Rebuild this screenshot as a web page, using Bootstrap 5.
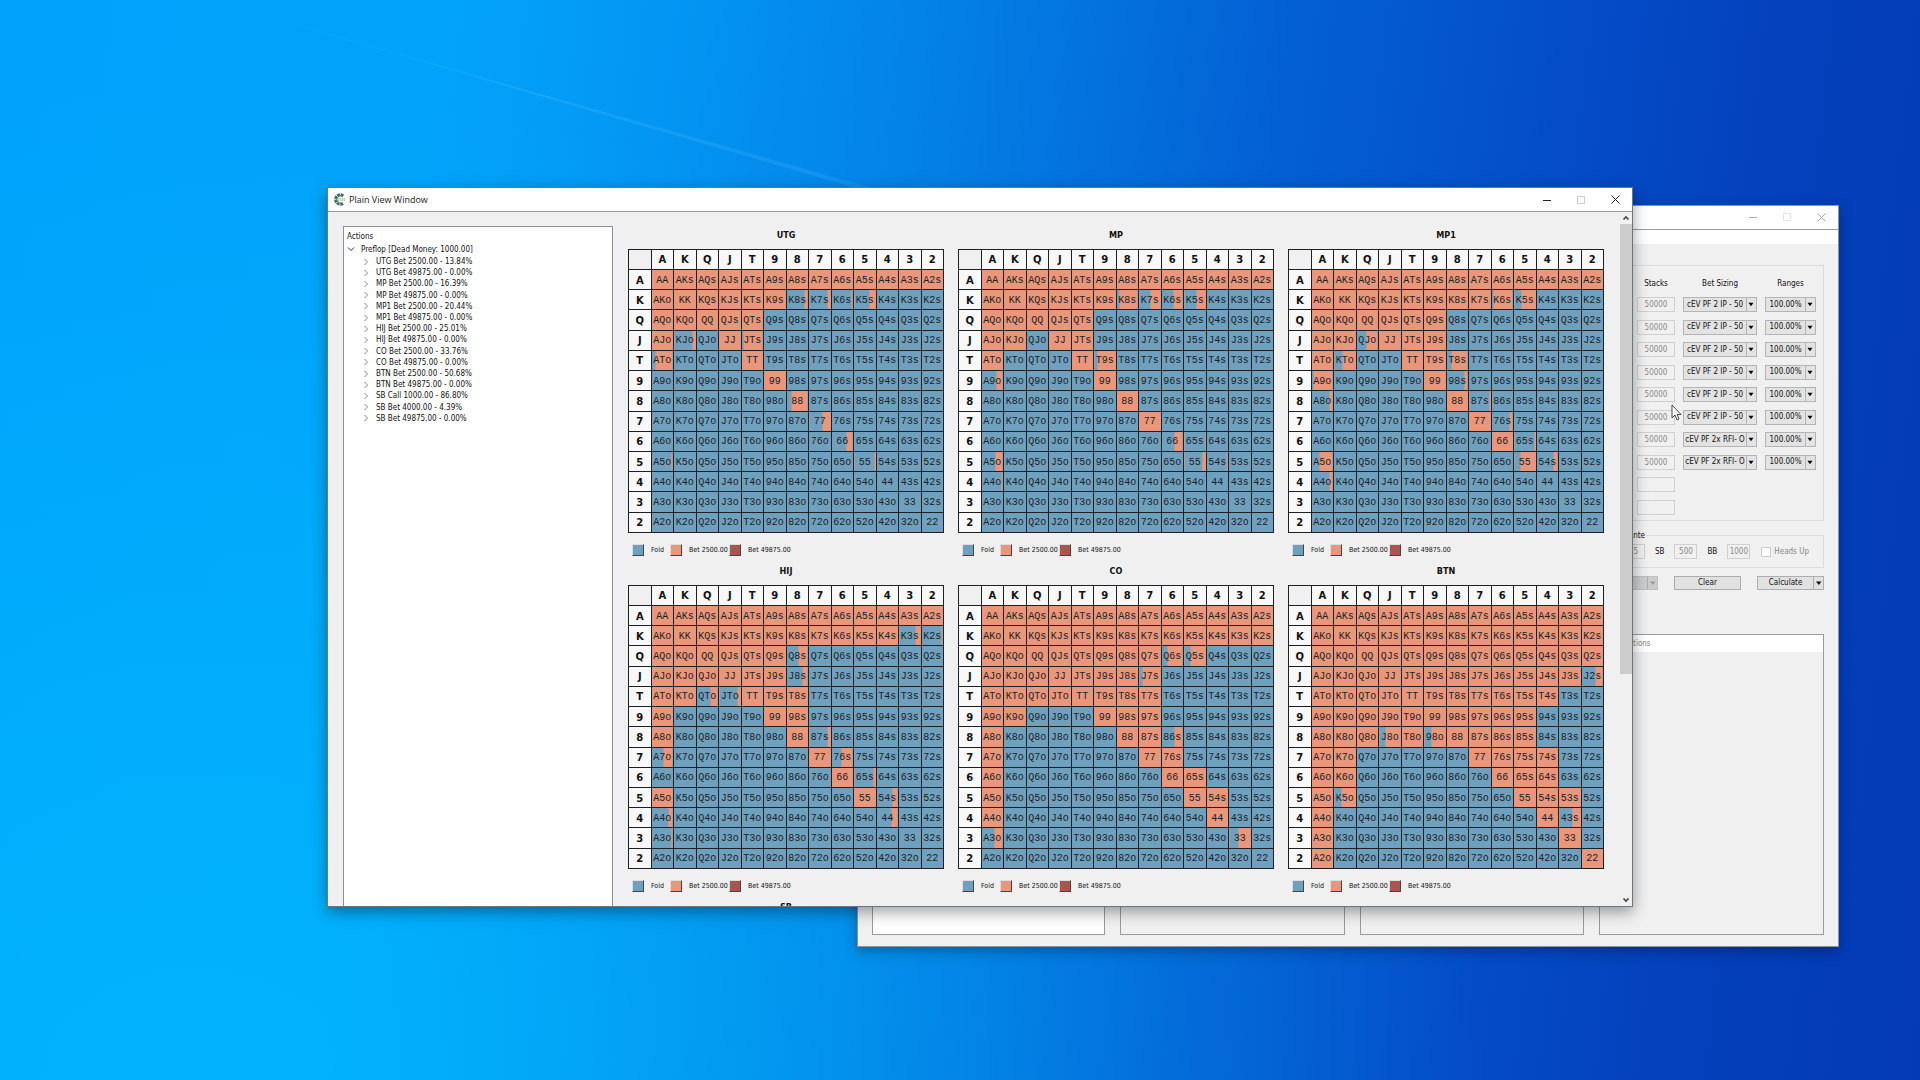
<!DOCTYPE html>
<html lang="en">
<head>
<meta charset="utf-8">
<meta name="viewport" content="width=device-width, initial-scale=1">
<title>Plain View Window</title>
<link href="https://cdn.jsdelivr.net/npm/bootstrap@5.3.0/dist/css/bootstrap.min.css" rel="stylesheet">
<style>
:root { --fold: #6fa1bf; --bet: #e9967a; --shove: #ac554e; --ui: "DejaVu Sans Condensed", "DejaVu Sans", sans-serif; }
body { font-family: var(--ui); font-size: 8px; line-height: 11px; color: #111; cursor: default; }
.desktop { background:
  radial-gradient(ellipse 1300px 1000px at 10% 100%, rgba(0,190,255,.6), rgba(0,190,255,0)),
  linear-gradient(97deg, #00a2fb 0%, #02a3fa 22%, #0394f2 34%, #037de4 48%, #0360d4 63%, #044cc8 77%, #0440bb 88%, #043ab5 100%); }
.beam { position: absolute; inset: 0; width: 100%; height: 100%; }
.app-window { position: absolute; background: #f0f0f0; border: 1px solid #6b7680; box-shadow: 0 5px 14px rgba(0,0,0,.38); overflow: hidden; }
.win-main { inset: 187px 287px 173px 327px; }
.win-back { inset: 205px 81px 133px 857px; border-color: #8b959d; box-shadow: 0 4px 12px rgba(0,0,0,.3); }
.titlebar { height: 24px; flex: none; background: #fff; border-bottom: 1px solid #9c9c9c; font: 9px/22px "Open Sans", sans-serif; color: #222; }
.caption-btn { width: 34px; height: 22px; padding: 0; border: 0; background: none; line-height: 0; color: #222; }
.win-back .caption-btn { color: #aaa; }
.caption-btn.dim { color: #ccc; }
.win-back .caption-btn.dim { color: #e4e4e4; }
.app-icon { margin: 0 3px 0 5px; }

/* action tree */
.tree { width: 270px; flex: none; margin: 14px 0 0 15px; background: #fff; border: 1px solid #8a9096; border-bottom: 0; padding: 4px 3px; }
.tree-rows { display: grid; grid-auto-rows: 1fr; height: 168px; padding-left: 15px; }
.tree svg { width: 8px; height: 8px; flex: none; fill: none; stroke: #888; }
.tree .root-node svg { stroke: #333; }
.root-node { height: 14px; }
.node-text { padding-left: 6px; }

/* range charts */
.charts { display: grid; grid-template-columns: repeat(3, 1fr); column-gap: 14px; padding: 12px 16px 0 15px; flex: 1; align-content: start; }
.chart { height: 336px; }
.chart h2 { font: bold 9px/22px var(--ui); margin: 0 0 3px; text-align: center; }
.range { width: 100%; height: 284px; table-layout: fixed; border-collapse: collapse; }
.range th, .range td { border: 1px solid #1b2125; padding: 0; text-align: center; vertical-align: middle; white-space: nowrap; overflow: hidden; }
.range th { background: #f8f8f8; font: bold 10px/12px "DejaVu Sans", sans-serif; }
.range thead th { height: 20px; }
.range tbody th, .range tbody td { padding-top: 2px; }
.range .corner { background: #f0f0f0; }
.range td { font: 10px/12px "Liberation Mono", monospace; color: #1c2226; background: linear-gradient(90deg, var(--fold) var(--cut), var(--bet) var(--cut)); }
.legend-row { display: grid; grid-template-columns: 12px 26px 12px 47px 12px 60px; height: 12px; margin-top: 11px; padding-left: 4px; font-size: 7px; line-height: 12px; }
.swatch { width: 12px; height: 12px; border: 1px solid; border-color: #ddd #444 #444 #ddd; }
.tag { text-align: left; white-space: nowrap; padding-left: 7px; }
.scrollbar { width: 12px; flex: none; background: #f0f0f0; }
.scrollbar svg { width: 12px; height: 12px; fill: none; stroke: #444; stroke-width: 1.6; }
.thumb { height: 450px; background: #cdcdcd; }

/* settings window */
.menu-strip { height: 14px; flex: none; background: #fff; }
.settings-body { padding: 0 14px; }
.group-box { border: 1px solid #dcdcdc; }
.seats { margin-top: 21px; height: 256px; padding: 13px 7px 0; }
.seat-grid { display: grid; grid-template-columns: 38px 74px 51px; column-gap: 8px; justify-content: end; text-align: center; }
.seat-head { line-height: 9px; height: 18px; }
.seat-grid > * { min-width: 0; }
.seat-rows { display: grid; grid-template-rows: repeat(10, 1fr); height: 225px; }
.field { width: 100%; height: 15px; border: 1px solid #d0d0d0; background: #f0f0f0; padding: 0; font: 8px/12px var(--ui); color: #888; text-align: center; border-radius: 0; }
.combo { width: 100%; height: 15px; appearance: none; border: 1px solid #b4b4b4; border-radius: 0; padding: 0 10px 0 0; font: 8px/12px var(--ui); color: #111; text-align: center; text-overflow: clip;
  background: #e3e3e3 url("data:image/svg+xml,%3Csvg xmlns='http://www.w3.org/2000/svg' width='10' height='14'%3E%3Cpath d='M.5 0v14' stroke='%23b4b4b4'/%3E%3Cpath d='M2.500 5h5l-2.500 3.500z'/%3E%3C/svg%3E") no-repeat right center; }
.blinds { height: 33px; margin-top: 14px; padding: 0 14px 0 0; color: #111; position: relative; }
.blinds legend { position: absolute; top: -6px; right: 177px; width: auto; margin: 0; padding: 0 1px; font-size: 8px; line-height: 11px; float: none; background: #f0f0f0; }
.blinds .field { width: 23px; }
.blind-tag { margin: 0 10px; }
.tick { appearance: none; width: 10px; height: 10px; border: 1px solid #ccc; background: #fff; margin: 0 3px 0 11px; }
.muted { color: #888; }
.push { height: 14px; border: 1px solid #adadad; background: #e1e1e1; padding: 0; font: 8px/12px var(--ui); color: #111; width: 67px; }
.push:disabled { background: #ccc; border-color: #bfbfbf; color: #999; }
.split { border-right: 1px solid #adadad; flex: 1; }
.drop-arrow { width: 9px; fill: currentColor; }
.panels { display: grid; grid-template-columns: 233px repeat(3, 1fr); column-gap: 15px; height: 301px; margin-top: 44px; }
.panel-box { border: 1px solid #9a9a9a; }
.panel-head { height: 17px; background: #fff; line-height: 17px; padding-left: 24px; color: #888; }
.pointer { position: absolute; left: 1671px; top: 404px; width: 11px; height: 17px; }
</style>
<script src="https://cdn.jsdelivr.net/npm/bootstrap@5.3.0/dist/js/bootstrap.bundle.min.js"></script>
</head>
<body>
<main class="desktop position-relative vh-100 overflow-hidden">
  <svg class="beam" viewBox="0 0 1920 1080" preserveAspectRatio="none" aria-hidden="true">
    <defs><linearGradient id="ray"><stop offset="0" stop-color="#5fc4ff" stop-opacity="0"/><stop offset=".5" stop-color="#5fc4ff" stop-opacity=".22"/><stop offset="1" stop-color="#5fc4ff" stop-opacity=".15"/></linearGradient></defs>
    <path d="M210 0L872 188L856 188Z" fill="url(#ray)"/>
  </svg>

  <section class="app-window win-back d-flex flex-column" aria-label="Settings">
    <header class="titlebar d-flex justify-content-end">
      <button class="caption-btn" aria-label="Minimize"><svg width="8" height="8" stroke="currentColor"><path d="M0 4.500h8"/></svg></button>
      <button class="caption-btn dim" aria-label="Maximize"><svg width="8" height="8" stroke="currentColor" fill="none"><path d="M.5.5h7v7h-7z"/></svg></button>
      <button class="caption-btn" aria-label="Close"><svg width="9" height="9" stroke="currentColor"><path d="M.5.5l8 8M8.500.5l-8 8"/></svg></button>
    </header>
    <div class="menu-strip"></div>
    <div class="flex-grow-1 settings-body">
      <div class="group-box seats">
        <div class="seat-grid" id="seats">
          <div class="seat-head">Stacks</div><div class="seat-head">Bet Sizing</div><div class="seat-head">Ranges</div>
          <div class="seat-rows" id="stacks"></div><div class="seat-rows" id="sizing"></div><div class="seat-rows" id="ranges"></div>
        </div>
      </div>
      <fieldset class="group-box blinds d-flex justify-content-end align-items-center">
        <legend>Ante</legend>
        <input class="field" value="25" aria-label="Ante" disabled>
        <label class="blind-tag" for="sb">SB</label><input class="field" id="sb" value="500" disabled>
        <label class="blind-tag" for="bb">BB</label><input class="field" id="bb" value="1000" disabled>
        <input type="checkbox" class="tick" id="hu" disabled><label class="muted" for="hu">Heads Up</label>
      </fieldset>
      <div class="d-flex justify-content-end mt-2 gap-3">
        <button class="push d-flex" disabled aria-label="Options"><span class="split">&nbsp;</span><svg class="drop-arrow" height="12" viewBox="0 0 9 12"><path d="M2 4.500h5.500L4.800 8z"/></svg></button>
        <button class="push">Clear</button>
        <button class="push d-flex"><span class="split">Calculate</span><svg class="drop-arrow" height="12" viewBox="0 0 9 12"><path d="M2 4.500h5.500L4.800 8z"/></svg></button>
      </div>
      <div class="panels">
        <div class="panel-box bg-white"></div><div class="panel-box"></div><div class="panel-box"></div>
        <div class="panel-box"><div class="panel-head">Actions</div></div>
      </div>
    </div>
  </section>
  <svg class="pointer" viewBox="0 0 11 17" aria-hidden="true"><path d="M1 1v13l3-3 2 5 2-1-2-4.500h4z" fill="#fff" stroke="#333" stroke-width=".9"/></svg>

  <section class="app-window win-main d-flex flex-column" aria-label="Plain View Window">
    <header class="titlebar d-flex align-items-center">
      <svg class="app-icon" width="13" height="13" viewBox="0 0 13 13" fill="none" aria-hidden="true">
        <path d="M10.500 2.600A5 5 0 1 0 10.500 10.400" stroke="#3f6f62" stroke-width="2.400" stroke-dasharray="3 .7"/>
        <path d="M9.500 3.500A3.600 3.600 0 1 0 9.500 9.500" stroke="#26413b" stroke-width=".8"/>
        <path d="M4.500 5.800h8M4.500 7.200h8" stroke="#7fb59a" stroke-width=".9" stroke-dasharray="1.500 .5"/>
      </svg>
      <span>Plain View Window</span>
      <div class="ms-auto d-flex">
        <button class="caption-btn" aria-label="Minimize"><svg width="8" height="8" stroke="currentColor"><path d="M0 4.500h8"/></svg></button>
        <button class="caption-btn dim" aria-label="Maximize"><svg width="8" height="8" stroke="currentColor" fill="none"><path d="M.5.5h7v7h-7z"/></svg></button>
        <button class="caption-btn" aria-label="Close"><svg width="9" height="9" stroke="currentColor"><path d="M.5.5l8 8M8.500.5l-8 8"/></svg></button>
      </div>
    </header>
    <div class="d-flex flex-grow-1 overflow-hidden">
      <aside class="tree">
        <div>Actions</div>
        <div class="root-node d-flex align-items-center"><svg viewBox="0 0 8 8"><path d="M1 2.500l3 3 3-3"/></svg><span class="node-text">Preflop [Dead Money: 1000.00]</span></div>
        <div class="tree-rows" id="tree"></div>
      </aside>
      <div class="charts" id="charts"></div>
      <div class="scrollbar d-flex flex-column">
        <svg viewBox="0 0 12 12"><path d="M3.500 7.500L6 5l2.500 2.500"/></svg>
        <div class="thumb"></div>
        <svg class="mt-auto" viewBox="0 0 12 12"><path d="M3.500 4.500L6 7l2.500-2.500"/></svg>
      </div>
    </div>
  </section>
</main>

<script>
const ranks = 'AKQJT98765432';
const actions = ['UTG Bet 2500.00 - 13.84%', 'UTG Bet 49875.00 - 0.00%', 'MP Bet 2500.00 - 16.39%', 'MP Bet 49875.00 - 0.00%',
  'MP1 Bet 2500.00 - 20.44%', 'MP1 Bet 49875.00 - 0.00%', 'HIJ Bet 2500.00 - 25.01%', 'HIJ Bet 49875.00 - 0.00%',
  'CO Bet 2500.00 - 33.76%', 'CO Bet 49875.00 - 0.00%', 'BTN Bet 2500.00 - 50.68%', 'BTN Bet 49875.00 - 0.00%',
  'SB Call 1000.00 - 86.80%', 'SB Bet 4000.00 - 4.39%', 'SB Bet 49875.00 - 0.00%'];

// One string per row: o = always bet, . = always fold. "mix" holds the fold share of the split hands.
const positions = [
  { name: 'UTG', rows: ['ooooooooooooo', 'oooooo.......', 'ooooo........', 'o..oo........', 'o...o........', '.....o.......', '', '', '', '', '', '', ''],
    mix: { K8s: 86, K7s: 82, K6s: 96, K5s: 67, KJo: 82, JTs: 10, ATo: 17, 88: 25, 77: 58, 66: 70, 55: 89, A5o: 96 } },
  { name: 'MP', rows: ['ooooooooooooo', 'oooooo.......', 'ooooo........', 'oo.oo........', 'o...o........', '.....o.......', '......o......', '.......o.....', '', '', '', '', ''],
    mix: { K8s: 12, K7s: 51, K6s: 58, K5s: 55, T9s: 12, A9o: 72, 66: 60, '65s': 94, A5o: 67, 55: 82, '54s': 94, A4o: 96 } },
  { name: 'MP1', rows: ['ooooooooooooo', 'oooooooo.....', 'oooooo.......', 'oo.ooo.......', 'o...oo.......', '.....o.......', '......o......', '.......o.....', '........o....', '', '', '', ''],
    mix: { K6s: 10, K5s: 30, QJo: 48, KTo: 38, T8s: 25, A9o: 11, '98s': 86, A8o: 86, '87s': 90, '76s': 85, '65s': 93, A5o: 38, 55: 27, '54s': 79, A4o: 88 } },
  { name: 'HIJ', rows: ['ooooooooooooo', 'ooooooooooo..', 'oooooo.......', 'oooooo.......', 'oo..ooo......', 'o....oo......', 'o.....o......', '.......o.....', '........o....', 'o........o...', '', '', ''],
    mix: { K3s: 75, K2s: 96, Q8s: 55, J8s: 78, QTo: 66, JTo: 80, '87s': 82, A7o: 55, '76s': 50, '65s': 85, '54s': 74, A4o: 80, 44: 70, A3o: 95 } },
  { name: 'CO', rows: ['ooooooooooooo', 'ooooooooooooo', 'oooooooo.....', 'ooooooo......', 'oooooooo.....', 'oo...ooo.....', 'o.....oo.....', 'o......oo....', 'o.......oo...', 'o........oo..', 'o.........o..', '', ''],
    mix: { Q6s: 30, Q5s: 28, J7s: 14, '86s': 62, A3o: 64, 33: 40 } },
  { name: 'BTN', rows: ['ooooooooooooo', 'ooooooooooooo', 'ooooooooooooo', 'oooooooooooo.', 'ooooooooooo..', 'oooooooooo...', 'oooooooooo...', 'oo.....oooo..', 'oo......ooo..', 'o........ooo.', 'o.........o..', 'o..........o.', 'o...........o'],
    mix: { J2s: 65, J8o: 27, '98o': 33, K5o: 30, '43s': 60 } },
  { name: 'SB', rows: ranks.split('').map(() => 'ooooooooooooo'), mix: {} }
];

const hand = (r, c) => r === c ? ranks[r] + ranks[c] : r < c ? ranks[r] + ranks[c] + 's' : ranks[c] + ranks[r] + 'o';

function chart(p) {
  const head = [...ranks].map(k => `<th scope="col">${k}</th>`).join('');
  const body = [...ranks].map((k, r) => `<tr><th scope="row">${k}</th>` + [...ranks].map((_, c) => {
    const h = hand(r, c);
    const cut = h in p.mix ? p.mix[h] : p.rows[r][c] === 'o' ? 0 : 100;
    return `<td style="--cut:${cut}%">${h}</td>`;
  }).join('') + '</tr>').join('');
  const legend = [['Fold', '--fold'], ['Bet 2500.00', '--bet'], ['Bet 49875.00', '--shove']]
    .map(([t, v]) => `<span class="swatch" style="background:var(${v})"></span><span class="tag">${t}</span>`).join('');
  return `<section class="chart"><h2>${p.name}</h2><table class="range"><thead><tr><td class="corner"></td>${head}</tr></thead><tbody>${body}</tbody></table><div class="legend-row">${legend}</div></section>`;
}

document.getElementById('charts').innerHTML = positions.map(chart).join('');
document.getElementById('tree').innerHTML = actions.map(a =>
  `<div class="d-flex align-items-center"><svg viewBox="0 0 8 8"><path d="M2.500 1l3 3-3 3"/></svg><span class="node-text">${a}</span></div>`).join('');

const seats = Array.from({ length: 10 }, (_, i) => i);
document.getElementById('stacks').innerHTML = seats.map(i => `<div><input class="field" aria-label="Stack ${i + 1}" value="${i < 8 ? 50000 : ''}" disabled></div>`).join('');
document.getElementById('sizing').innerHTML = seats.slice(0, 8).map(i => `<div><select class="combo" aria-label="Bet sizing ${i + 1}"><option>${i < 6 ? 'cEV PF 2 IP - 50' : 'cEV PF 2x RFI- O'}</option></select></div>`).join('');
document.getElementById('ranges').innerHTML = seats.slice(0, 8).map(i => `<div><select class="combo" aria-label="Range ${i + 1}"><option>100.00%</option></select></div>`).join('');
</script>
</body>
</html>
